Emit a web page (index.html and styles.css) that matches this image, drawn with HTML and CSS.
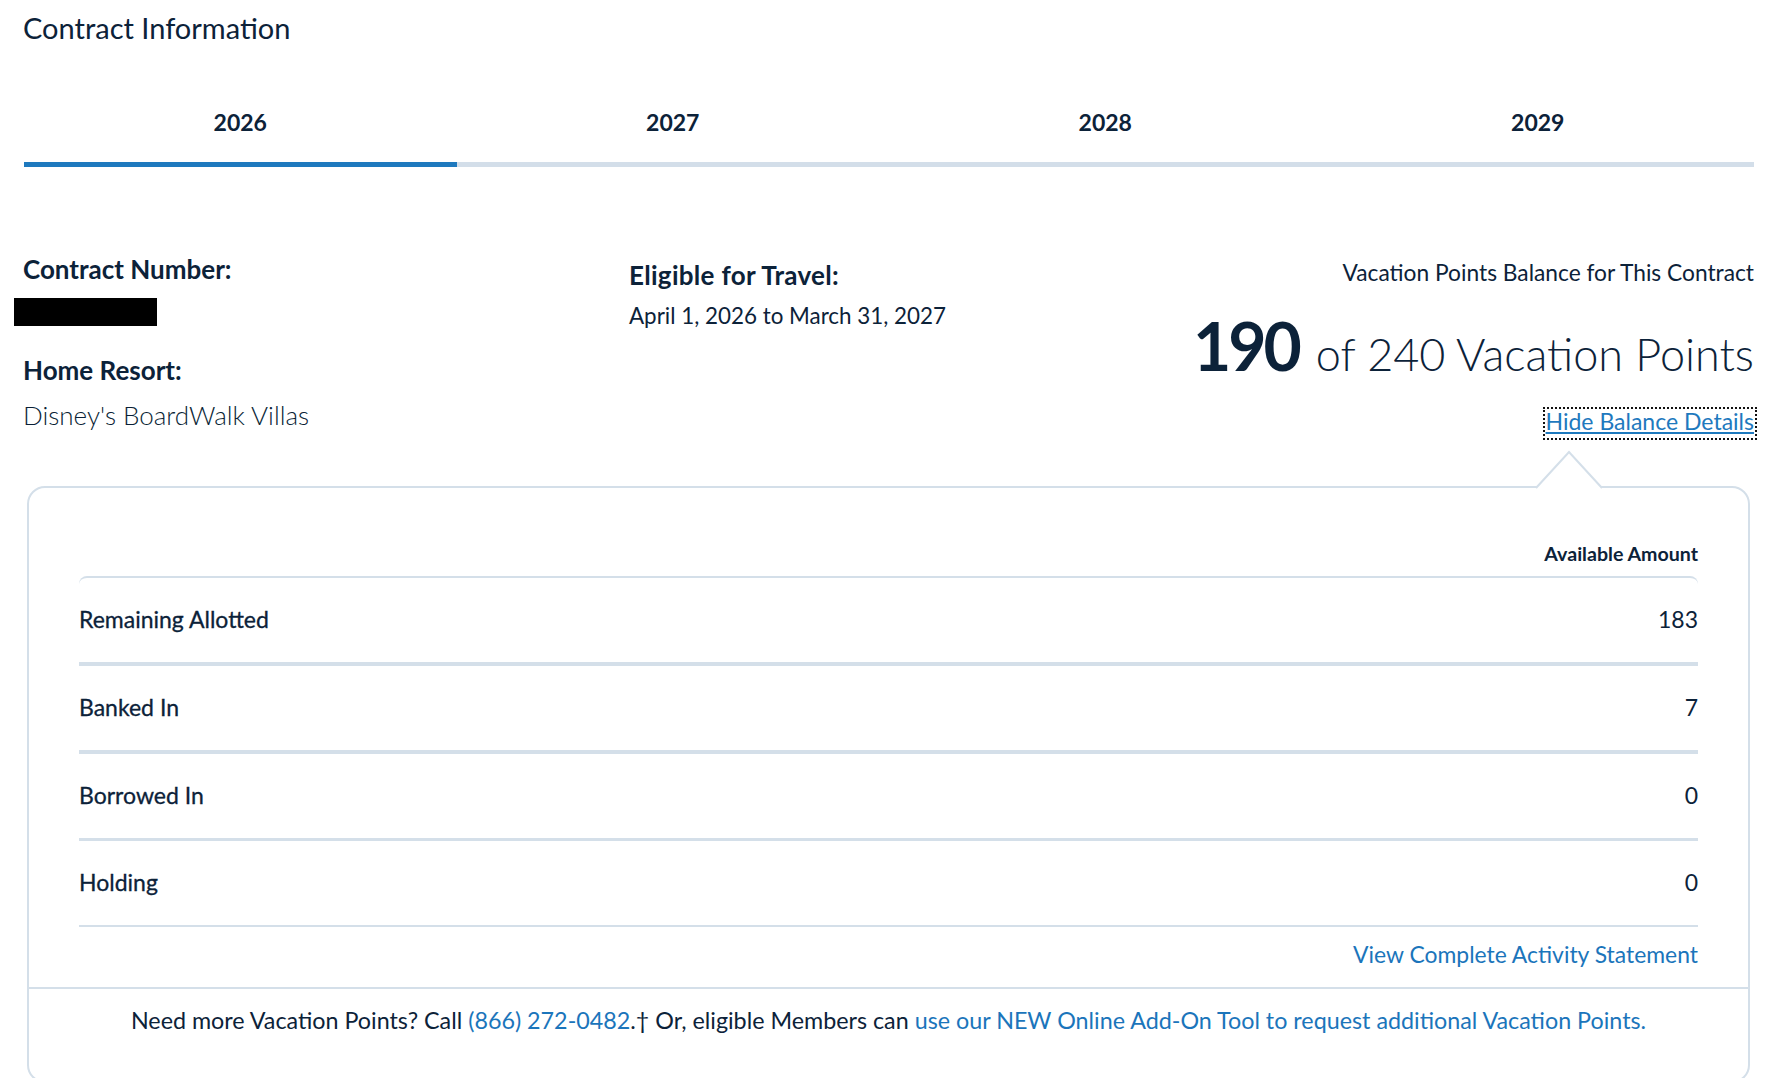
FILE: index.html
```html
<!DOCTYPE html>
<html lang="en">
<head>
<meta charset="utf-8">
<title>Contract Information</title>
<link rel="stylesheet" href="styles.css">
</head>
<body>
<main class="page">
  <h1 class="title">Contract Information</h1>
  <nav class="tabs">
    <a class="tab tab-active">2026</a>
    <a class="tab">2027</a>
    <a class="tab">2028</a>
    <a class="tab">2029</a>
  </nav>

  <section class="summary">
    <div class="col col-contract">
      <h2 class="label">Contract Number:</h2>
      <div class="redacted"></div>
      <h2 class="label label-resort">Home Resort:</h2>
      <p class="value value-resort">Disney's BoardWalk Villas</p>
    </div>
    <div class="col col-travel">
      <h2 class="label">Eligible for Travel:</h2>
      <p class="value value-travel">April 1, 2026 to March 31, 2027</p>
    </div>
    <div class="col col-balance">
      <p class="balance-head">Vacation Points Balance for This Contract</p>
      <p class="balance-total"><strong class="balance-num">190</strong> <span class="balance-of">of 240 Vacation Points</span></p>
      <a class="balance-toggle" href="#">Hide Balance Details</a>
    </div>
  </section>

  <section class="panel">
    <svg class="notch" width="68" height="40" viewBox="0 0 68 40">
      <rect x="2" y="34" width="64" height="6" fill="#ffffff"/>
      <polyline points="1,38 34,2 67,38" fill="#ffffff" stroke="#d4dfe9" stroke-width="2"/>
    </svg>
    <div class="amount-head">Available Amount</div>
    <div class="rows">
      <div class="row row-thick"><span class="row-label">Remaining Allotted</span><span class="row-val">183</span></div>
      <div class="row row-thick"><span class="row-label">Banked In</span><span class="row-val">7</span></div>
      <div class="row row-mid"><span class="row-label">Borrowed In</span><span class="row-val">0</span></div>
      <div class="row row-thin"><span class="row-label">Holding</span><span class="row-val">0</span></div>
    </div>
    <div class="activity"><a class="link" href="#">View Complete Activity Statement</a></div>
    <div class="panel-foot">
      Need more Vacation Points? Call <a class="link" href="#">(866) 272-0482</a>.† Or, eligible Members can <a class="link" href="#">use our NEW Online Add-On Tool to request additional Vacation Points.</a>
    </div>
  </section>
</main>
</body>
</html>
```

FILE: styles.css
```css
html {
  overflow: hidden;
}

body {
  margin: 0;
  background: #ffffff;
  color: #0c2239;
  font-family: Lato, "Open Sans", "Liberation Sans", sans-serif;
}

.page {
  padding: 0 35px 0 23px;
}

.title {
  margin: 0;
  padding-top: 11px;
  font-size: 29px;
  line-height: 34px;
  font-weight: 400;
}

/* Tabs */
.tabs {
  display: flex;
  margin: 41px 0 0 1px;
}

.tab {
  flex: 1;
  text-align: center;
  font-size: 23px;
  line-height: 28px;
  font-weight: 700;
  padding: 22px 0 26px;
  border-bottom: 5px solid #d3dee9;
  color: #0c2239;
}

.tab-active {
  border-bottom-color: #1e79be;
}

/* Summary */
.summary {
  display: flex;
  align-items: flex-start;
  padding-top: 87px;
}

.col-contract {
  width: 606px;
}

.col-travel {
  margin-top: 6px;
}

.col-balance {
  margin-left: auto;
  margin-top: 5px;
  display: flex;
  flex-direction: column;
  align-items: flex-end;
  text-align: right;
}

.label {
  margin: 0;
  font-size: 26px;
  line-height: 30px;
  font-weight: 700;
}

.col-travel .label {
  letter-spacing: 0.3px;
}

.redacted {
  width: 143px;
  height: 28px;
  margin: 14px 0 0 -9px;
  background: #000000;
}

.label-resort {
  margin-top: 29px;
}

.value {
  margin: 0;
  font-size: 22px;
  line-height: 28px;
  font-weight: 400;
}

.value-resort {
  margin-top: 16px;
  font-size: 26px;
  font-weight: 300;
  color: #0a1f36;
}

.value-travel {
  margin-top: 12px;
  font-size: 22.4px;
}

.balance-head {
  margin: 0;
  font-size: 22.75px;
  line-height: 28px;
}

.balance-total {
  margin: 26px 0 0;
  font-size: 66px;
  line-height: 1;
  white-space: nowrap;
}

.balance-num {
  font-weight: 700;
  letter-spacing: -3px;
}

.balance-of {
  font-size: 45px;
  font-weight: 300;
}

.balance-toggle {
  display: inline-block;
  margin-top: 31px;
  padding: 0 0 5px;
  font-size: 23px;
  line-height: 22px;
  color: #1e79be;
  text-decoration: underline;
  outline: 2px dotted #111111;
  outline-offset: 1px;
}

/* Panel */
.panel {
  position: relative;
  margin: 49px 4px 0 4px;
  border: 2px solid #d4dfe9;
  border-radius: 18px;
  padding: 54px 50px 0;
}

.notch {
  position: absolute;
  top: -38px;
  right: 145px;
  display: block;
}

.amount-head {
  text-align: right;
  font-size: 19.6px;
  line-height: 24px;
  font-weight: 700;
  padding-bottom: 10px;
}

.rows {
  border-top: 2px solid #d4dfe9;
  border-radius: 8px 8px 0 0;
}

.row {
  display: flex;
  justify-content: space-between;
  padding: 27px 0 29px;
  font-size: 23px;
  line-height: 28px;
}

.row-label {
  -webkit-text-stroke: 0.3px currentColor;
}

.row-thick {
  border-bottom: 4px solid #d4dfe9;
}

.row-mid {
  border-bottom: 3px solid #d4dfe9;
}

.row-thin {
  border-bottom: 2px solid #d4dfe9;
}

.activity {
  margin-top: 13px;
  text-align: right;
  font-size: 22.9px;
  line-height: 28px;
}

.link {
  color: #1b75bb;
  text-decoration: none;
}

.panel-foot {
  margin: 19px -50px 0;
  border-top: 2px solid #d4dfe9;
  padding: 17px 0 47px;
  text-align: center;
  font-size: 23.3px;
  line-height: 28px;
}
```
